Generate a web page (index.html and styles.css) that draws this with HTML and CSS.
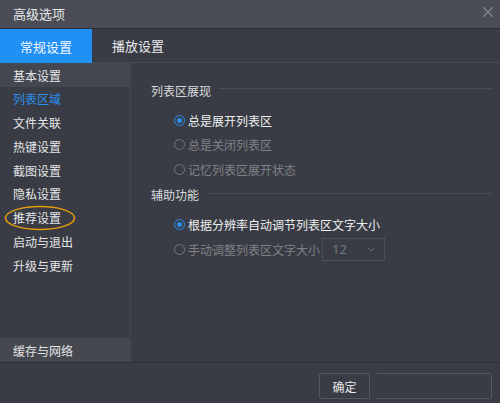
FILE: index.html
```html
<!DOCTYPE html>
<html lang="zh-CN">
<head>
<meta charset="utf-8">
<title>高级选项</title>
<link rel="stylesheet" href="styles.css">
</head>
<body>
<div class="window">
  <div class="titlebar">
    <span class="title">高级选项</span>
    <svg class="close" width="12" height="12" viewBox="0 0 12 12"><path d="M1 1 L11 11 M11 1 L1 11" stroke="#85878d" stroke-width="1.3" fill="none"/></svg>
  </div>
  <div class="tabs">
    <div class="tab active">常规设置</div>
    <div class="tab">播放设置</div>
  </div>
  <div class="main">
    <div class="sidebar">
      <div class="nav-item selected">基本设置</div>
      <div class="nav-item current">列表区域</div>
      <div class="nav-item">文件关联</div>
      <div class="nav-item">热键设置</div>
      <div class="nav-item">截图设置</div>
      <div class="nav-item">隐私设置</div>
      <div class="nav-item marked">推荐设置
        <svg class="ring" width="72" height="26" viewBox="0 0 72 26"><ellipse cx="36" cy="13" rx="34.5" ry="11.5" stroke="#e59c0c" stroke-width="1.5" fill="none"/></svg>
      </div>
      <div class="nav-item">启动与退出</div>
      <div class="nav-item">升级与更新</div>
      <div class="nav-item bottom">缓存与网络</div>
    </div>
    <div class="content">
      <div class="section-title"><span>列表区展现</span><i class="rule"></i></div>
      <div class="options">
        <div class="option"><span class="radio on"></span><span>总是展开列表区</span></div>
        <div class="option disabled"><span class="radio"></span><span>总是关闭列表区</span></div>
        <div class="option disabled"><span class="radio"></span><span>记忆列表区展开状态</span></div>
      </div>
      <div class="section-title second"><span>辅助功能</span><i class="rule"></i></div>
      <div class="options">
        <div class="option"><span class="radio on"></span><span>根据分辨率自动调节列表区文字大小</span></div>
        <div class="option disabled"><span class="radio"></span><span>手动调整列表区文字大小</span>
          <div class="select"><span>12</span><svg width="8" height="5" viewBox="0 0 8 5"><path d="M0.5 0.5 L4 4 L7.5 0.5" stroke="#6f7177" stroke-width="1" fill="none"/></svg></div>
        </div>
      </div>
    </div>
  </div>
  <div class="footer">
    <div class="btn">确定</div>
    <div class="btn blank"></div>
  </div>
</div>
</body>
</html>
```
FILE: styles.css
```css
* { box-sizing: border-box; }
html, body { margin: 0; padding: 0; }
body {
  width: 500px;
  height: 403px;
  overflow: hidden;
  background: #393c44;
  font-family: "Noto Sans CJK SC", "Noto Sans", sans-serif;
  color: #e4e5e7;
}
.window {
  width: 500px;
  height: 403px;
  display: flex;
  flex-direction: column;
}
.titlebar {
  height: 29px;
  flex: none;
  background: #4a4d55;
  border-bottom: 1px solid #2c2e33;
  display: flex;
  align-items: center;
  justify-content: space-between;
  padding: 0 6px 2px 13px;
}
.title { font-size: 13px; color: #e6e7e9; }
.close { margin-top: -2px; }
.tabs {
  height: 34px;
  flex: none;
  display: flex;
  background: #393c44;
  border-bottom: 1px solid #474a52;
}
.tab {
  width: 92px;
  display: flex;
  align-items: center;
  justify-content: center;
  font-size: 13px;
  color: #e8e9eb;
}
.tab.active {
  background: #2190f5;
  color: #f4f8ff;
  margin-bottom: -1px;
}
.main {
  height: 299px;
  flex: none;
  display: flex;
}
.sidebar {
  width: 131px;
  flex: none;
  display: flex;
  flex-direction: column;
  background: #393c44;
  border-right: 1px solid #42454c;
}
.nav-item {
  position: relative;
  height: 23.75px;
  flex: none;
  display: flex;
  align-items: center;
  padding-left: 13px;
  font-size: 12px;
  color: #e4e5e7;
}
.nav-item.selected { background: #44474f; height: 24px; }
.nav-item.current { color: #2b8fee; }
.nav-item.bottom {
  margin-top: auto;
  background: #45484f;
  height: 24px;
}
.ring {
  position: absolute;
  left: 4px;
  top: -1px;
}
.content {
  flex: 1;
  padding: 15px 8px 0 20px;
}
.section-title {
  height: 24px;
  display: flex;
  align-items: center;
  font-size: 12px;
  color: #d8d9dc;
}
.section-title.second { margin-top: 1px; }
.rule {
  flex: 1;
  height: 1px;
  background: #4a4d54;
  margin-left: 8px;
  margin-top: -3px;
}
.options {
  margin-top: 6px;
  padding-left: 23px;
}
.option {
  height: 24.5px;
  display: flex;
  align-items: center;
  font-size: 12px;
  color: #eeeff1;
}
.option.disabled { color: #7f8186; }
.radio {
  width: 11px;
  height: 11px;
  border-radius: 50%;
  border: 1px solid #75777c;
  margin-right: 3px;
  flex: none;
  position: relative;
}
.radio.on {
  border-color: #2a8ff0;
}
.radio.on::after {
  content: "";
  position: absolute;
  left: 2px;
  top: 2px;
  width: 5px;
  height: 5px;
  border-radius: 50%;
  background: #2a8ff0;
}
.select {
  margin-left: 2px;
  width: 63px;
  height: 23px;
  border: 1px solid #4d5057;
  display: flex;
  align-items: center;
  justify-content: space-between;
  padding: 0 9px 0 9px;
  font-family: "Noto Sans", sans-serif;
  font-size: 13px;
  color: #75777c;
}
.footer {
  flex: 1;
  border-top: 1px solid #2c2e33;
  display: flex;
  justify-content: flex-end;
  align-items: flex-start;
  padding: 10px 8px 0 0;
  gap: 7px;
}
.btn {
  width: 51px;
  height: 26px;
  border: 1px solid #54575e;
  border-radius: 2px;
  display: flex;
  align-items: center;
  justify-content: center;
  font-size: 12px;
  color: #e8e9eb;
}
.btn.blank {
  width: 115px;
  border-left: none;
  border-radius: 0 2px 2px 0;
}
```
